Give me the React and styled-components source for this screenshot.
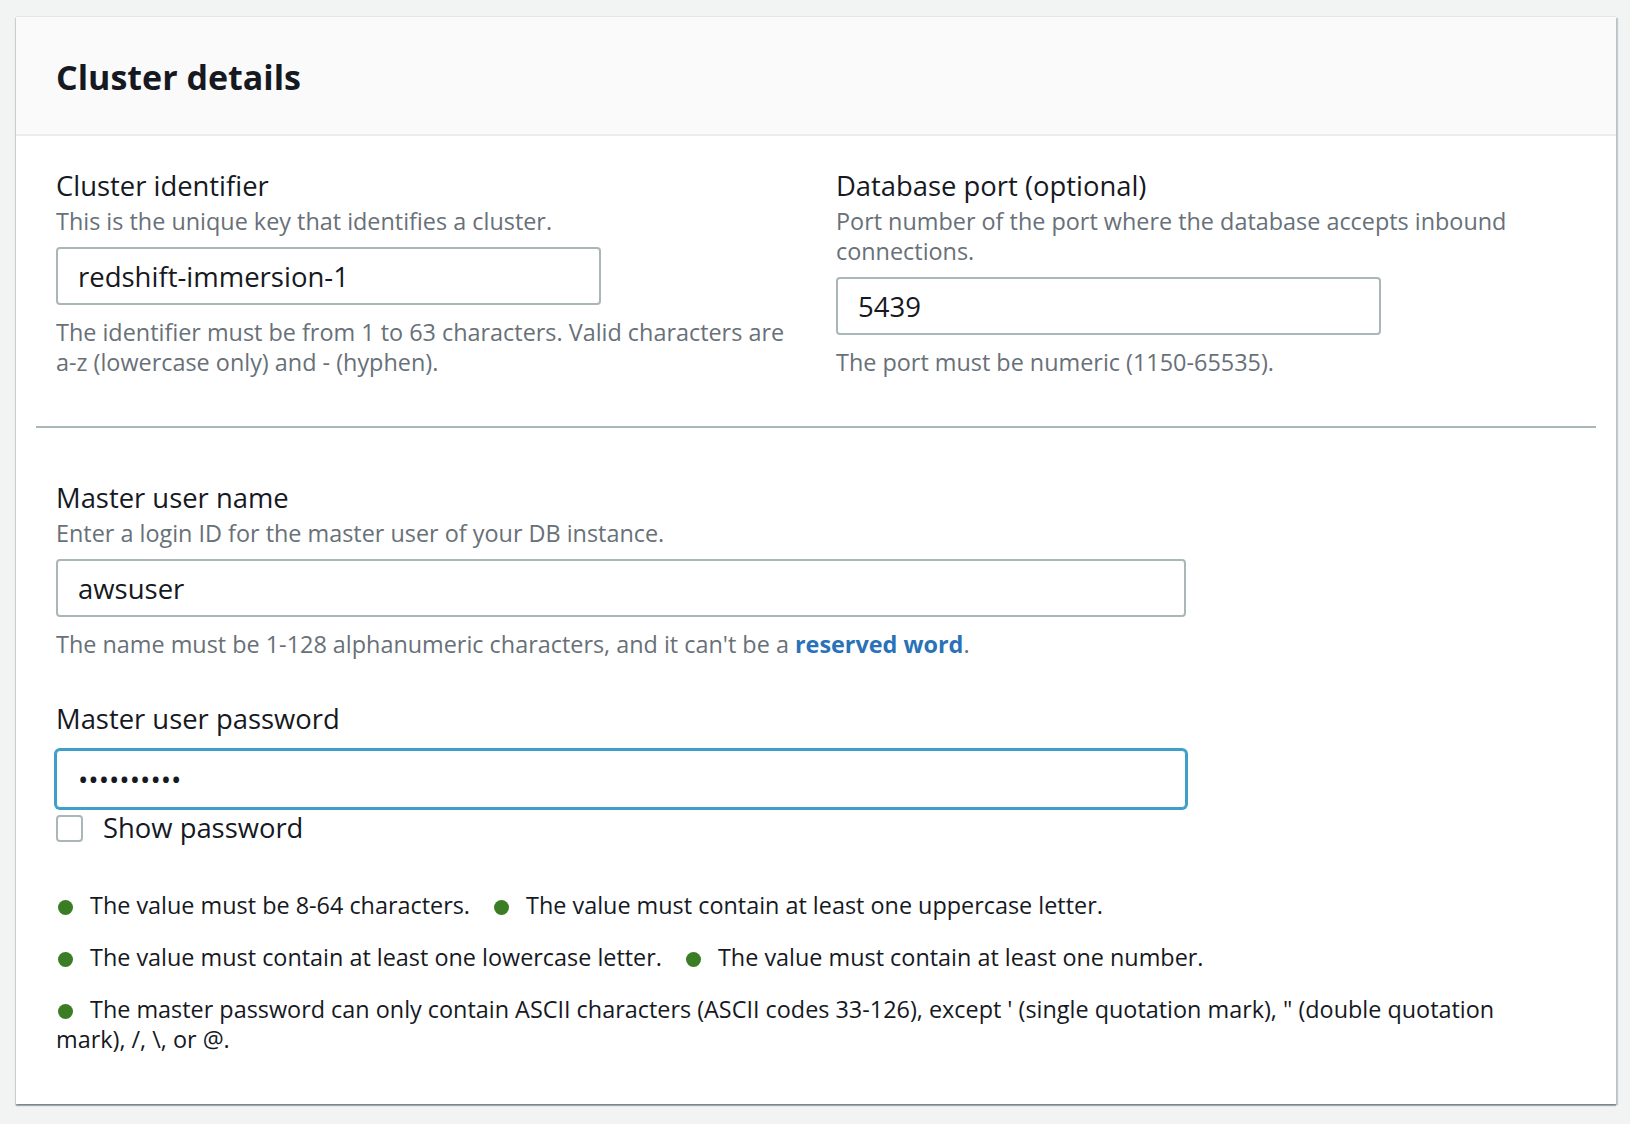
import React from "react";
import styled, { createGlobalStyle } from "styled-components";

const GlobalStyle = createGlobalStyle`
  html, body {
    margin: 0;
    padding: 0;
    background: #f2f3f3;
  }
  body {
    font-family: "Open Sans", "Noto Sans", sans-serif;
    color: #16191f;
  }
  *, *::before, *::after {
    box-sizing: border-box;
  }
`;

const Page = styled.div`
  padding: 17px 14px 10px 16px;
`;

const Card = styled.section`
  background: #ffffff;
  box-shadow: 0 2px 1px 0 rgba(0, 28, 36, 0.3), 2px 1px 1px 0 rgba(0, 28, 36, 0.18),
    -1px 1px 1px 0 rgba(0, 28, 36, 0.12), 0 -1px 0 0 rgba(0, 28, 36, 0.06);
`;

const Header = styled.header`
  height: 119px;
  padding: 40px 40px 0;
  background: #fafafa;
  border-bottom: 2px solid #eaeded;
`;

const Title = styled.h2`
  margin: 0;
  font-size: 34px;
  line-height: 40px;
  font-weight: 700;
  color: #16191f;
`;

const Body = styled.div`
  padding: 33px 20px 50px;
`;

const Section = styled.div`
  padding: 0 20px;
`;

const TwoColumns = styled.div`
  display: grid;
  grid-template-columns: 1fr 1fr;
  column-gap: 40px;
  align-items: start;
`;

const Field = styled.div`
  display: flex;
  flex-direction: column;
  align-items: flex-start;
  margin-top: ${(p) => p.$gap || 0}px;
`;

const Label = styled.label`
  font-size: 27.4px;
  line-height: 34px;
  color: #16191f;
`;

const Description = styled.div`
  margin-top: 3px;
  font-size: 23.4px;
  line-height: 30px;
  color: #687078;
`;

const Input = styled.input`
  display: block;
  margin-top: 14px;
  width: ${(p) => p.$width}px;
  height: 58px;
  padding: 0 ${(p) => (p.$focused ? 21 : 20)}px;
  border: ${(p) => (p.$focused ? "1px solid #3f9fc9" : "2px solid #aab7b8")};
  border-radius: 4px;
  box-shadow: ${(p) => (p.$focused ? "0 0 0 2px #3f9fc9" : "none")};
  background: #ffffff;
  font-family: inherit;
  font-size: 27.5px;
  color: #16191f;
  outline: none;

  ${Description} + & {
    margin-top: 11px;
  }
`;

const Constraint = styled.div`
  margin-top: 12px;
  font-size: 23.4px;
  line-height: 30px;
  color: #687078;
`;

const Link = styled.a`
  color: #2a72b8;
  font-weight: 700;
  text-decoration: none;
`;

const Divider = styled.hr`
  margin: 49px 0 53px;
  border: 0;
  height: 2px;
  background: #aab7b8;
`;

const CheckRow = styled.label`
  display: flex;
  align-items: center;
  gap: 20px;
  margin-top: 3px;
  font-size: 27.4px;
  line-height: 34px;
  color: #16191f;
`;

const CheckBox = styled.span`
  display: inline-block;
  width: 27px;
  height: 27px;
  border: 2px solid #aab7b8;
  border-radius: 4px;
  background: #ffffff;
`;

const RequirementList = styled.div`
  display: flex;
  flex-direction: column;
  gap: 22px;
  margin-top: 45px;
  width: 1460px;
`;

const RequirementRow = styled.div`
  font-size: 23.4px;
  line-height: 30px;
  color: #16191f;
`;

const Requirement = styled.span`
  margin-right: 22px;
`;

const Dot = styled.span`
  display: inline-block;
  width: 15px;
  height: 15px;
  margin: 0 17px 0 2px;
  border-radius: 50%;
  background: #3a7d24;
  vertical-align: -1px;
`;

const rows = [
  ["The value must be 8-64 characters.", "The value must contain at least one uppercase letter."],
  ["The value must contain at least one lowercase letter.", "The value must contain at least one number."],
  [
    "The master password can only contain ASCII characters (ASCII codes 33-126), except ' (single quotation mark), \" (double quotation mark), /, \\, or @.",
  ],
];

export default function App() {
  return (
    <>
      <GlobalStyle />
      <Page>
        <Card>
          <Header>
            <Title>Cluster details</Title>
          </Header>
          <Body>
            <Section>
              <TwoColumns>
                <Field>
                  <Label>Cluster identifier</Label>
                  <Description>This is the unique key that identifies a cluster.</Description>
                  <Input $width={545} readOnly value="redshift-immersion-1" />
                  <Constraint>
                    The identifier must be from 1 to 63 characters. Valid characters are a-z (lowercase only) and -
                    (hyphen).
                  </Constraint>
                </Field>
                <Field>
                  <Label>Database port (optional)</Label>
                  <Description>Port number of the port where the database accepts inbound connections.</Description>
                  <Input $width={545} readOnly value="5439" />
                  <Constraint>The port must be numeric (1150-65535).</Constraint>
                </Field>
              </TwoColumns>
            </Section>
            <Divider />
            <Section>
              <Field>
                <Label>Master user name</Label>
                <Description>Enter a login ID for the master user of your DB instance.</Description>
                <Input $width={1130} readOnly value="awsuser" />
                <Constraint>
                  The name must be 1-128 alphanumeric characters, and it can't be a <Link href="#">reserved word</Link>.
                </Constraint>
              </Field>
              <Field $gap={43}>
                <Label>Master user password</Label>
                <Input $width={1130} $focused type="password" readOnly value="abcdefghij" />
              </Field>
              <CheckRow>
                <CheckBox />
                Show password
              </CheckRow>
              <RequirementList>
                {rows.map((row, i) => (
                  <RequirementRow key={i}>
                    {row.map((text) => (
                      <Requirement key={text}>
                        <Dot />
                        {text}
                      </Requirement>
                    ))}
                  </RequirementRow>
                ))}
              </RequirementList>
            </Section>
          </Body>
        </Card>
      </Page>
    </>
  );
}
